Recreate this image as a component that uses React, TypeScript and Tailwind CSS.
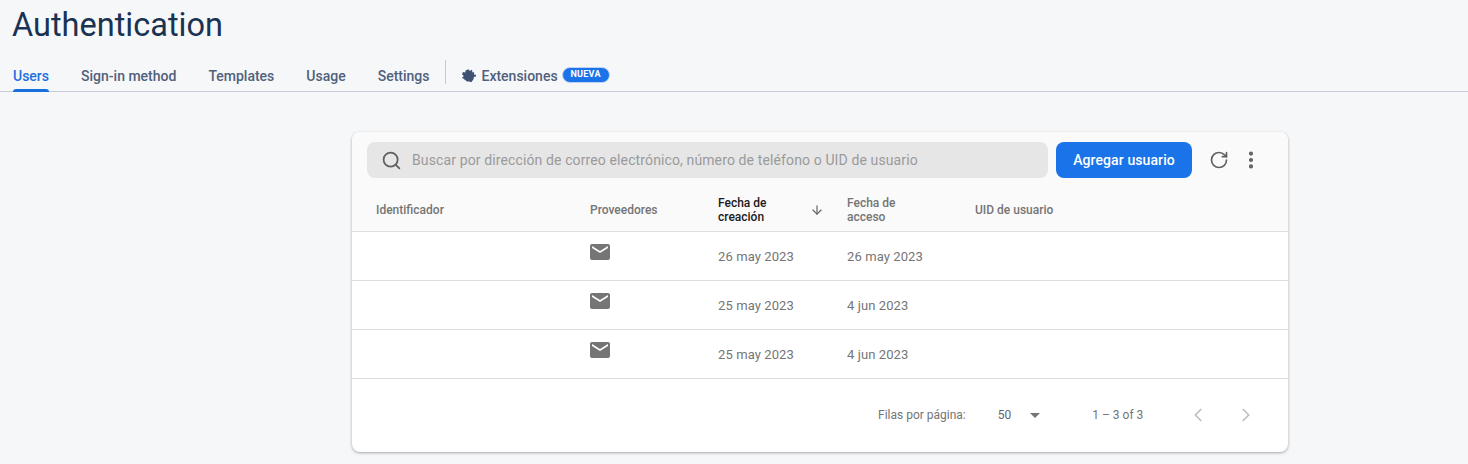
import { ArrowDown, ChevronLeft, ChevronRight, MoreVertical, RotateCw, Search } from "lucide-react";

const rows = [
  { created: "26 may 2023", access: "26 may 2023" },
  { created: "25 may 2023", access: "4 jun 2023" },
  { created: "25 may 2023", access: "4 jun 2023" },
];

const tabs = ["Sign-in method", "Templates", "Usage", "Settings"];

function MailIcon() {
  return (
    <svg width="24" height="24" viewBox="0 0 24 24" className="fill-[#757575]">
      <path d="M20 4H4c-1.1 0-1.99.9-1.99 2L2 18c0 1.1.9 2 2 2h16c1.1 0 2-.9 2-2V6c0-1.1-.9-2-2-2zm0 4l-8 5-8-5V6l8 5 8-5v2z" />
    </svg>
  );
}

function ExtensionIcon() {
  return (
    <svg width="16" height="16" viewBox="0 0 16 16" className="fill-[#3f5273]">
      <path d="M7.2 1.2 9 3l1.4-1.2 1.2 1.3-.8 1.1h2.4l-.2 2.6 1.3-.4.9 1.3-1 1.4-1.2-.3-.6 2.7-2.2 2.8-2.7-1.1-1.1.6-3-2.2L1 9.5l1.7-1.2-.5-1.1L1 6.4l.9-2.3 2.4.4.3-2z" />
    </svg>
  );
}

export default function App() {
  return (
    <div className="h-[464px] overflow-hidden bg-[#f6f7f9] font-['Roboto',sans-serif]">
      <div className="h-[92px] border-b border-[#c3ccd8]">
        <h1 className="pl-3 pt-[5px] font-['Roboto',sans-serif] text-[32.5px] leading-[40px] text-[#1a3353]">
          Authentication
        </h1>
        <nav className="mt-[15px] flex h-[32px] items-stretch pl-[13px] text-[14px] font-medium text-[#50617c]">
          <div className="flex h-[32px] flex-col items-center justify-center">
            <span className="relative flex h-full items-center text-[#1a6fe0]">
              Users
              <span className="absolute bottom-0 left-0 right-0 h-[3px] rounded-t-[3px] bg-[#1a6fe0]" />
            </span>
          </div>
          {tabs.map((tab) => (
            <span key={tab} className="ml-8 flex items-center">
              {tab}
            </span>
          ))}
          <span className="ml-4 h-[24px] w-px self-start bg-[#c3ccd8]" />
          <span className="ml-[15px] flex items-center gap-[4px]">
            <ExtensionIcon />
            Extensiones
          </span>
          <span className="ml-[4px] mt-[7px] flex h-[16px] w-[48px] items-center justify-center rounded-full border border-[#bcd3f5] bg-[#1a73e8] text-[9px] font-bold tracking-[0.3px] text-white">
            NUEVA
          </span>
        </nav>
      </div>

      <div className="ml-[352px] mt-[40px] h-[320px] w-[936px] overflow-hidden rounded-lg bg-white shadow-[0_1px_3px_rgba(60,64,67,0.45)]">
        <div className="bg-[#fafafa]">
          <div className="flex h-[56px] items-start pl-[15px] pt-[10px]">
            <div className="flex h-[36px] w-[681px] items-center rounded-lg bg-[#e6e6e6] pl-[14px] text-[14px] text-[#9a9a9a]">
              <Search size={21} strokeWidth={2} className="text-[#5f5f5f]" />
              <span className="ml-[10px] tracking-[0.12px]">
                Buscar por dirección de correo electrónico, número de teléfono o UID de usuario
              </span>
            </div>
            <button className="ml-2 h-[36px] w-[136px] rounded-lg bg-[#1a73e8] text-[14px] font-medium tracking-[0.1px] text-white">
              Agregar usuario
            </button>
            <div className="ml-[17px] flex h-[36px] items-center">
              <RotateCw size={20} strokeWidth={2} className="text-[#616161]" />
            </div>
            <div className="ml-[11px] flex h-[36px] items-center">
              <MoreVertical size={22} strokeWidth={2.6} className="text-[#616161]" />
            </div>
          </div>
          <div className="grid h-[44px] grid-cols-[214px_128px_129px_128px_1fr] items-center border-b border-[#dedede] pl-6 text-[12px] font-medium leading-[14px] text-[#757575]">
            <span>Identificador</span>
            <span>Proveedores</span>
            <div className="flex items-center text-[#1a1a1a]">
              <span className="w-[92px]">
                Fecha de
                <br />
                creación
              </span>
              <ArrowDown size={14} strokeWidth={2} className="text-[#616161]" />
            </div>
            <span>
              Fecha de
              <br />
              acceso
            </span>
            <span>UID de usuario</span>
          </div>
        </div>

        {rows.map((row, i) => (
          <div
            key={i}
            className="grid h-[49px] grid-cols-[214px_128px_129px_128px_1fr] border-b border-[#dedede] pl-6 text-[13px] tracking-[0.1px] text-[#757575]"
          >
            <span />
            <div className="pt-[8px]">
              <span className="-ml-[2px] block w-[24px]">
                <MailIcon />
              </span>
            </div>
            <span className="pt-[16px] leading-[18px]">{row.created}</span>
            <span className="pt-[16px] leading-[18px]">{row.access}</span>
            <span />
          </div>
        ))}

        <div className="flex h-[72px] items-center pl-[526px] text-[12px] text-[#757575]">
          <span>Filas por página:</span>
          <span className="ml-[32px] text-[#666]">50</span>
          <span className="ml-[19px] h-0 w-0 border-x-[5px] border-t-[5px] border-x-transparent border-t-[#757575]" />
          <span className="ml-[52px]">1 – 3 of 3</span>
          <ChevronLeft size={22} strokeWidth={1.8} className="ml-[44px] text-[#bdbdbd]" />
          <ChevronRight size={22} strokeWidth={1.8} className="ml-[26px] text-[#bdbdbd]" />
        </div>
      </div>
    </div>
  );
}
